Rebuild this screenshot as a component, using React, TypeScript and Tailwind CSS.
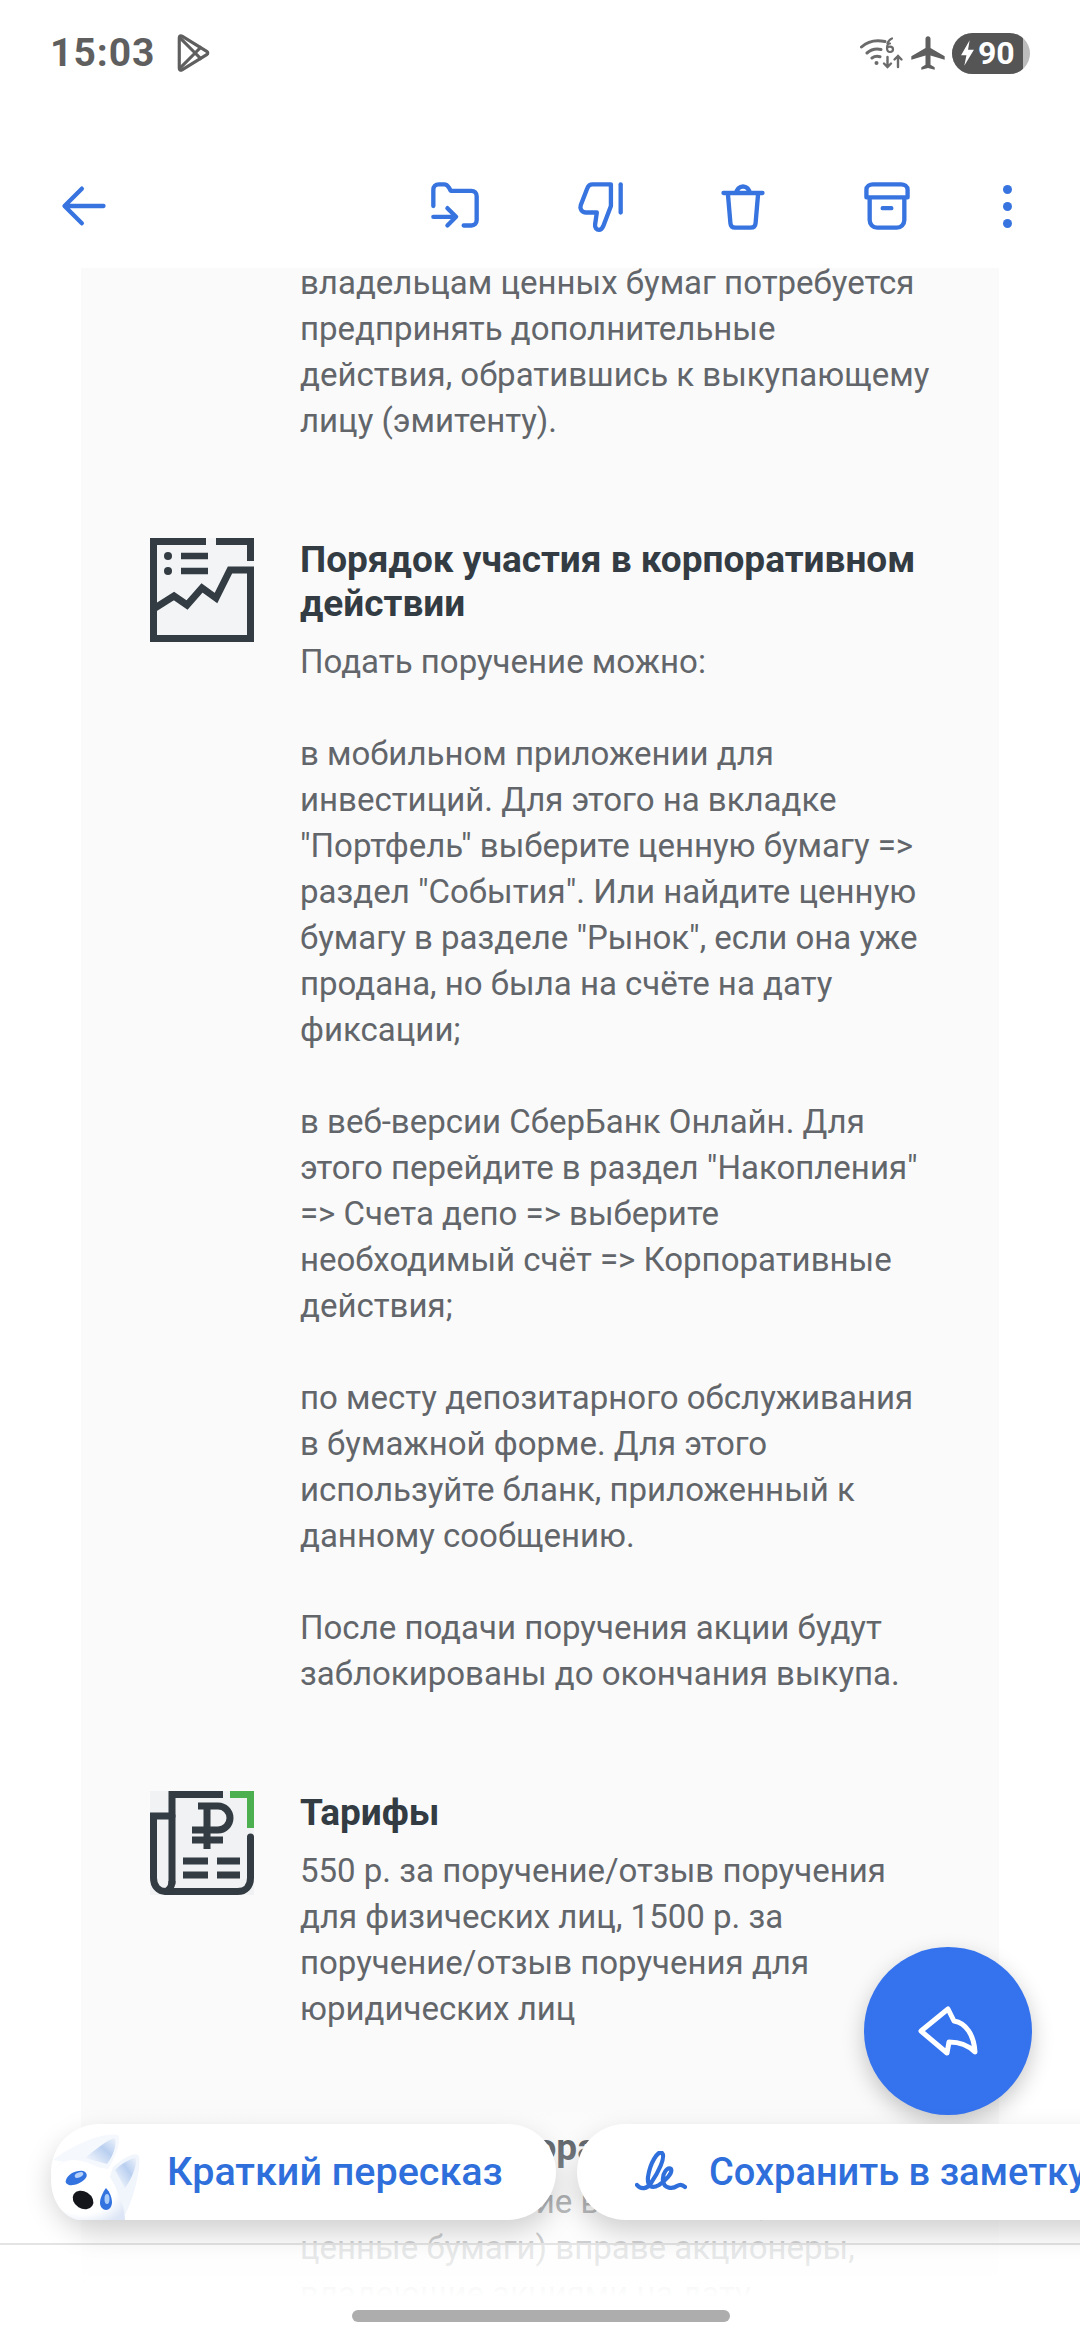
import { MdAirplanemodeActive } from "react-icons/md";

const roboto = "font-['Roboto',sans-serif]";

const ToolbarIcon = ({ children }: { children: React.ReactNode }) => (
  <svg
    viewBox="0 0 24 24"
    className="w-[52px] h-[52px]"
    fill="none"
    stroke="#3874e0"
    strokeWidth="2"
    strokeLinecap="round"
    strokeLinejoin="round"
  >
    {children}
  </svg>
);

const PlayIcon = () => (
  <svg viewBox="0 0 32 36" className="w-[34px] h-[38px]" fill="none" stroke="#5f5f5f" strokeWidth="3" strokeLinejoin="round">
    <path d="M3 3.500c0-1.600 1.300-2.200 2.600-1.400L29 16.400c1.300.8 1.300 2.400 0 3.200L5.600 33.900C4.300 34.700 3 34.100 3 32.500z" />
    <path d="M3 3l15 15L3 33M18 18l6-6M18 18l6 6" />
  </svg>
);

const WifiIcon = () => (
  <svg viewBox="0 0 44 32" className="w-[44px] h-[32px]" fill="none" stroke="#6b6b6b" strokeWidth="3" strokeLinecap="round">
    <path d="M1.500 10C8 4 16 2.500 25 4.500M7 16c4-3.500 9-4.500 14-3.500M12 21c2.500-1.800 5-2 8-1.300" />
    <circle cx="16.500" cy="26" r="2" fill="#6b6b6b" stroke="none" />
    <path d="M30 6.500c-2 0-3 1.500-3 4.500s1 4 3 4 3-1 3-2.700-1-2.600-3-2.600-3 1-3 2M32 1.500c-2 .6-3.600 2.500-4.600 5" strokeWidth="2.200" />
    <path d="M27.500 20v10M24 26.500l3.500 3.500 3.500-3.500M38 30V19M34.500 22.500l3.500-3.500 3.500 3.500" strokeWidth="2.400" />
  </svg>
);

const ChartIcon = () => (
  <svg viewBox="0 0 104 104" className="w-[104px] h-[104px] shrink-0">
    <rect width="104" height="104" fill="#f2f4f5" />
    <g fill="none" stroke="#333b43" strokeWidth="7">
      <path d="M56 3.500H3.500v97h97V32H80L66 60 52 50 37 67 24 58 5 70" />
      <path d="M66 3.500h34.500V23" />
    </g>
    <path d="M31 18h27M31 33h27" stroke="#333b43" strokeWidth="6.500" />
    <circle cx="18" cy="18" r="4" fill="#333b43" />
    <circle cx="18" cy="33" r="4" fill="#333b43" />
  </svg>
);

const RubleIcon = () => (
  <svg viewBox="0 0 104 104" className="w-[104px] h-[104px] shrink-0">
    <rect width="104" height="104" fill="#f1f2f3" />
    <g fill="none" stroke="#333b43" strokeWidth="7">
      <path d="M73 3.500H22v90" />
      <path d="M22 25H3.500v62c0 8 5 13.500 12 13.500h72c8 0 13-5.500 13-13.500V46" strokeLinecap="round" />
      <path d="M22 90c0 6-3 10-8 11" />
      <path d="M57 15v43M42 39h26a12 12 0 0 0 0-24H48M42 49h31" />
      <path d="M33 70h25M67 70h23M33 84h25M67 84h23" />
    </g>
    <path d="M80 3.500h20.500V37" fill="none" stroke="#4caf50" strokeWidth="7" />
  </svg>
);

// only its top edge shows above the chips
const DocIcon = () => (
  <svg viewBox="0 0 104 104" className="w-[104px] h-[104px] shrink-0">
    <path d="M7 3h42M57 3h42" fill="none" stroke="#4a5056" strokeWidth="6" />
  </svg>
);

const Mascot = () => (
  <svg viewBox="0 0 90 96" className="w-[90px] h-[96px] absolute left-0 top-0">
    <defs>
      <linearGradient id="ear" x1="0" y1="1" x2="1" y2="0">
        <stop offset="0" stopColor="#ffffff" />
        <stop offset="0.6" stopColor="#b9cff0" />
        <stop offset="1" stopColor="#eef3fb" />
      </linearGradient>
      <radialGradient id="head" cx="0.42" cy="0.45" r="0.7">
        <stop offset="0.65" stopColor="#ffffff" />
        <stop offset="1" stopColor="#dde6f6" />
      </radialGradient>
    </defs>
    <path d="M58 56L62 43C70 36 82 28 87 31c4 4-1 36-13 60z" fill="#f1f5fc" />
    <path d="M64 46C70 40 80 34 85 34c1 8-4 20-11 30z" fill="url(#ear)" />
    <path d="M2 36C20 22 50 8 67 11c4 4-2 22-10 34z" fill="#f5f8fd" />
    <path d="M34 34C44 26 56 16 64 14c2 8-2 18-8 26z" fill="url(#ear)" />
    <path d="M0 56C1 44 10 35 24 36c16 2 32 10 38 22 6 12 12 26 12 38H26C10 92 0 74 0 56z" fill="url(#head)" />
    <path d="M15 56c2-6 10-10 17-9 4 1 5 5 2 8-4 4-11 7-16 6-3-1-4-3-3-5z" fill="#3273e0" />
    <ellipse cx="28" cy="51" rx="4.500" ry="2.300" fill="#b6d2fa" transform="rotate(-22 28 51)" />
    <ellipse cx="32" cy="76" rx="11" ry="8.500" fill="#14161c" transform="rotate(32 32 76)" />
    <path d="M55 64c4 4 6 10 6 14 0 5-3 8-6 8s-6-3-6-7c0-5 3-11 6-15z" fill="#3273e0" />
    <ellipse cx="56" cy="75" rx="2.500" ry="5" fill="#a9ccf8" />
  </svg>
);

const Section = ({ icon, children }: { icon: React.ReactNode; children: React.ReactNode }) => (
  <div className="flex gap-[46px] pl-[69px] pr-[60px]">
    {icon}
    <div className="flex-1 text-[33px] leading-[46px] text-[#62666a]">{children}</div>
  </div>
);

const Heading = ({ children }: { children: React.ReactNode }) => (
  <h2 className="text-[37px] leading-[44px] font-bold text-[#333b43] mb-[13px]">{children}</h2>
);

export default function App() {
  return (
    <div className={`relative w-[1080px] h-[2340px] overflow-hidden bg-white flex flex-col ${roboto}`}>
      {/* status bar */}
      <div className="h-[106px] shrink-0 flex items-center justify-between pl-[50px] pr-[50px]">
        <div className="flex items-center gap-[20px]">
          <span className="text-[39px] font-bold text-[#5f5f5f] tracking-[1px]">15:03</span>
          <PlayIcon />
        </div>
        <div className="flex items-center gap-[4px]">
          <WifiIcon />
          <MdAirplanemodeActive className="w-[40px] h-[40px] text-[#5f5f5f]" />
          <div className="flex w-[78px] h-[41px] rounded-full overflow-hidden bg-[#bdbdbd]">
            <div className="w-[71px] h-full bg-[#555555] flex items-center pl-[8px] gap-[3px] text-white text-[32px] font-bold">
              <svg viewBox="0 0 14 24" className="w-[15px] h-[26px]" fill="#ffffff">
                <path d="M9 0L1 14h5l-2 10 9-15H7.500z" />
              </svg>
              <span>90</span>
            </div>
          </div>
        </div>
      </div>

      {/* toolbar */}
      <div className="h-[162px] shrink-0 flex items-center pt-[38px] pl-[58px] pr-[68px]">
        <ToolbarIcon>
          <path d="M21 12H4M11 4l-8 8 8 8" />
        </ToolbarIcon>
        <div className="flex items-center gap-[92px] ml-auto">
          <ToolbarIcon>
            <path d="M2 12V4.500C2 3 3 2 4.500 2H7c1 0 1.600.5 2.200 1.500L10 5h9.500C21 5 22 6 22 7.500v11c0 1.500-1 2.500-2.500 2.500H16" />
            <path d="M2 17h10M8.500 13l4 4-4 4" />
          </ToolbarIcon>
          <ToolbarIcon>
            <path d="M17.500 2H9C7.800 2 7 2.700 6.600 3.800L3.600 11.500C3 13.200 4 15 6 15h5l-.8 5.500c-.2 1.500.7 2.500 1.800 2.500 1 0 1.500-.6 2-1.800l3.500-9.200V2z" />
            <path d="M22 2v13" />
          </ToolbarIcon>
          <ToolbarIcon>
            <path d="M3 6h18M9 6a3 3 0 0 1 6 0M5 6l1.200 14c.1 1.300 1 2 2.200 2h7.200c1.200 0 2.100-.7 2.200-2L19 6" />
          </ToolbarIcon>
          <ToolbarIcon>
            <path d="M5.500 2h13C20 2 21.500 3 21.500 4.500V8h-19V4.500C2.500 3 4 2 5.500 2zM4 8v10.500C4 20.500 5.500 22 7.500 22h9c2 0 3.500-1.500 3.500-3.500V8M10 13h4" />
          </ToolbarIcon>
        </div>
        <div className="flex flex-col gap-[8px] ml-[90px]">
          <span className="w-[9px] h-[9px] rounded-full bg-[#3874e0]" />
          <span className="w-[9px] h-[9px] rounded-full bg-[#3874e0]" />
          <span className="w-[9px] h-[9px] rounded-full bg-[#3874e0]" />
        </div>
      </div>

      {/* message body */}
      <div className="flex-1 overflow-hidden ml-[81px] mr-[81px] bg-[#fafafa]">
        <div className="-mt-[8px] flex flex-col gap-[94px]">
          <div className="pl-[219px] pr-[40px] text-[33px] leading-[46px] text-[#62666a]">
            владельцам ценных бумаг потребуется
            <br />
            предпринять дополнительные
            <br />
            действия, обратившись к выкупающему
            <br />
            лицу (эмитенту).
          </div>
          <Section icon={<ChartIcon />}>
            <Heading>Порядок участия в корпоративном действии</Heading>
            <p>Подать поручение можно:</p>
            <p className="mt-[46px]">
              в мобильном приложении для инвестиций. Для этого на вкладке "Портфель" выберите ценную бумагу =&gt; раздел "События". Или найдите ценную бумагу в разделе "Рынок", если она уже продана, но была на счёте на дату фиксации;
            </p>
            <p className="mt-[46px]">
              в веб-версии СберБанк Онлайн. Для этого перейдите в раздел "Накопления" =&gt; Счета депо =&gt; выберите необходимый счёт =&gt; Корпоративные действия;
            </p>
            <p className="mt-[46px]">
              по месту депозитарного обслуживания в бумажной форме. Для этого используйте бланк, приложенный к данному сообщению.
            </p>
            <p className="mt-[46px]">После подачи поручения акции будут заблокированы до окончания выкупа.</p>
          </Section>
          <Section icon={<RubleIcon />}>
            <Heading>Тарифы</Heading>
            <p>
              550 р. за поручение/отзыв поручения для физических лиц, 1500 р. за поручение/отзыв поручения для юридических лиц
            </p>
          </Section>
          <Section icon={<DocIcon />}>
            <Heading>Порядок выбора</Heading>
            <p className="-mt-[4px]">Право на участие в продаже (выкупе, ценные бумаги) вправе акционеры, владеющие акциями на дату</p>
          </Section>
        </div>
      </div>

      {/* fade over the lower part of the message */}
      <div className="absolute left-0 right-0 top-[2090px] h-[153px] bg-gradient-to-b from-white/0 to-white/70" />
      <div className="absolute left-0 right-0 top-[2243px] bottom-0 border-t-2 border-[#e4e4e4] bg-gradient-to-b from-white/85 to-white from-15% to-55%" />

      {/* reply button */}
      <div className="absolute left-[864px] top-[1947px] w-[168px] h-[168px] rounded-full bg-[#3572ee] shadow-[0_8px_22px_rgba(0,0,0,0.22)] flex items-center justify-center">
        <svg viewBox="0 0 60 50" className="w-[60px] h-[50px]" fill="none" stroke="#ffffff" strokeWidth="5" strokeLinejoin="round" strokeLinecap="round">
          <path d="M3 25L30 3l6 12c12 2 20 14 21 31C50 39 41 36 31 36l-2 11z" />
        </svg>
      </div>

      {/* quick action chips */}
      <div className="absolute left-[51px] top-[2124px] flex gap-[21px] font-medium text-[#2f6fdb]">
        <div className="relative w-[505px] h-[96px] rounded-full bg-white shadow-[0_12px_28px_rgba(0,0,0,0.18)] flex items-center pl-[116px] whitespace-nowrap text-[39.5px]">
          <Mascot />
          Краткий пересказ
        </div>
        <div className="w-[620px] h-[96px] rounded-l-full bg-white shadow-[0_12px_28px_rgba(0,0,0,0.18)] flex items-center pl-[58px] gap-[22px] whitespace-nowrap text-[38px]">
          <svg viewBox="0 0 52 42" className="w-[52px] h-[42px]" fill="none" stroke="#2f6fdb" strokeWidth="4.200" strokeLinecap="round" strokeLinejoin="round">
            <path d="M2 34c4 5 10 4 14-2C23 22 31 6 27 2c-4-3-12 10-14 24-1 10 4 12 11 8 6-4 14-12 12-16-3-3-9 4-8 12 1 8 10 8 14 5 3-2 6-1 8 1" />
          </svg>
          Сохранить в заметку
        </div>
      </div>

      {/* home indicator */}
      <div className="absolute left-[352px] top-[2310px] w-[378px] h-[12px] rounded-full bg-[#adadad]" />
    </div>
  );
}
